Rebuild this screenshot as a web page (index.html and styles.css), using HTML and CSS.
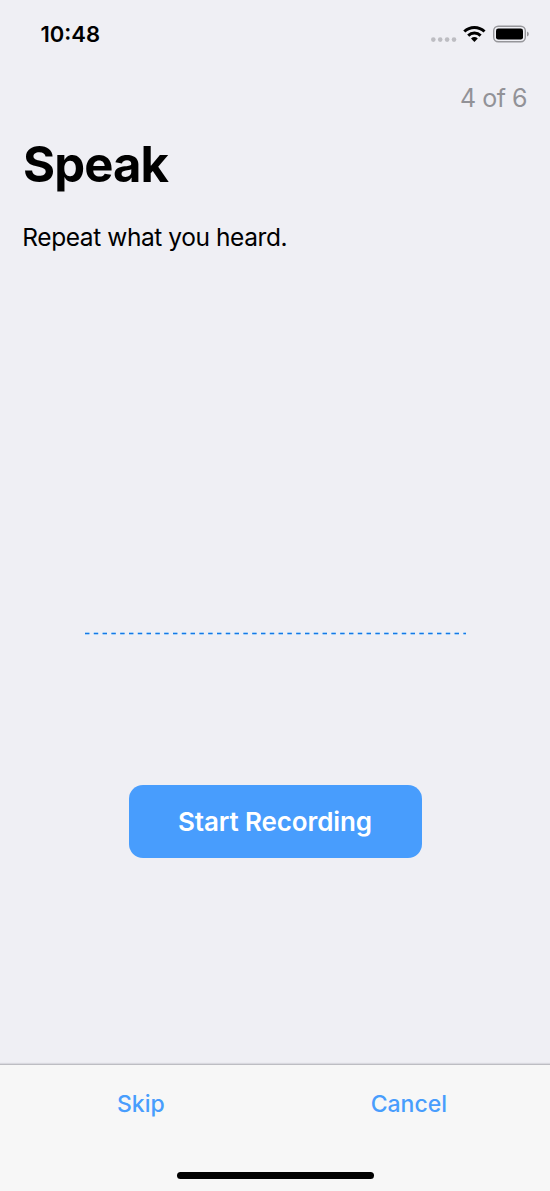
FILE: index.html
```html
<!DOCTYPE html>
<html lang="en">
<head>
<meta charset="utf-8">
<title>Speak</title>
<link rel="stylesheet" href="styles.css">
</head>
<body>
<div class="screen">
  <header class="status">
    <span class="time">10:48</span>
    <svg class="indicators" width="100" height="20" viewBox="0 0 100 20">
      <g fill="#bdbdc2"><circle cx="3.300" cy="15.600" r="2.300"/><circle cx="10.200" cy="15.600" r="2.300"/><circle cx="17.100" cy="15.600" r="2.300"/><circle cx="24" cy="15.600" r="2.300"/></g>
      <g fill="none" stroke="#000" stroke-width="3"><path d="M34.300 7.500a14.500 14.500 0 0 1 20.200 0"/><path d="M38.200 11.600a9 9 0 0 1 12.400 0"/></g>
      <path d="M41 14.500a5.300 5.300 0 0 1 6.800 0L44.400 18z"/>
      <rect x="63.700" y="2.200" width="31.600" height="15.600" rx="4.500" fill="none" stroke="#96969a" stroke-width="1.400"/>
      <rect x="66" y="4.500" width="27" height="11" rx="2.300"/>
      <path d="M97 7.500q1.900 .8 1.900 2.500t-1.900 2.500z" fill="#96969a"/>
    </svg>
  </header>
  <main class="content">
    <p class="progress">4 of 6</p>
    <h1 class="title">Speak</h1>
    <p class="instruction">Repeat what you heard.</p>
    <svg class="wave" width="382" height="3" viewBox="0 0 382 3">
      <path d="M1 1.500H382" stroke="#a5d0f8" stroke-width="3" stroke-dasharray="4.400 4.400"/>
      <path d="M1 1.500H382" stroke="#1678e5" stroke-width="1" stroke-dasharray="4.400 4.400"/>
    </svg>
    <button class="record">Start Recording</button>
  </main>
  <footer class="toolbar">
    <nav class="actions"><a class="action skip">Skip</a><a class="action cancel">Cancel</a></nav>
    <div class="home"></div>
  </footer>
</div>
</body>
</html>
```

FILE: styles.css
```css
* { box-sizing: border-box; }
body { margin: 0; font-family: Inter, Roboto, sans-serif; color: #000; }
h1, p { margin: 0; white-space: nowrap; }
.screen { width: 550px; height: 1191px; background: #efeff4; display: flex; flex-direction: column; overflow: hidden; }
.status { height: 68px; padding: 20px 20px 0 40.500px; display: flex; justify-content: space-between; align-items: flex-start; }
.time { font-size: 22px; line-height: 28px; font-weight: 600; letter-spacing: 0; }
.indicators { margin-top: 4px; }
.content { flex: 1; display: flex; flex-direction: column; padding: 0 23px; }
.progress { align-self: flex-end; margin-top: 14px; font-size: 25px; line-height: 32px; color: #929297; letter-spacing: -.5px; }
.title { margin-top: 20px; font-size: 49px; line-height: 62px; font-weight: 700; letter-spacing: -.9px; }
.instruction { margin: 25px 0 0 -.7px; font-size: 24.500px; line-height: 32px; letter-spacing: -.42px; }
.wave { align-self: center; margin-top: 379px; flex: none; }
.record { align-self: center; flex: none; width: 293px; height: 73.500px; margin-top: 149.500px; padding: 1px 0 0; border: 0; border-radius: 14px; background: #489dfd; color: #fff; font: 600 26px/32px Inter, sans-serif; letter-spacing: -.1px; }
.toolbar { height: 127px; background: #f7f7f7; border-top: 1px solid #bdbdc3; box-shadow: 0 -1px 1px #d9d9df; display: flex; flex-direction: column; justify-content: space-between; align-items: center; padding: 24px 0 12px; }
.actions { display: flex; width: 100%; justify-content: space-between; padding: 0 103px 0 117px; }
.action { font-size: 23px; line-height: 30px; font-weight: 500; color: #489dfd; letter-spacing: 0; }
.home { width: 197px; height: 7px; border-radius: 4px; background: #000; }
```
